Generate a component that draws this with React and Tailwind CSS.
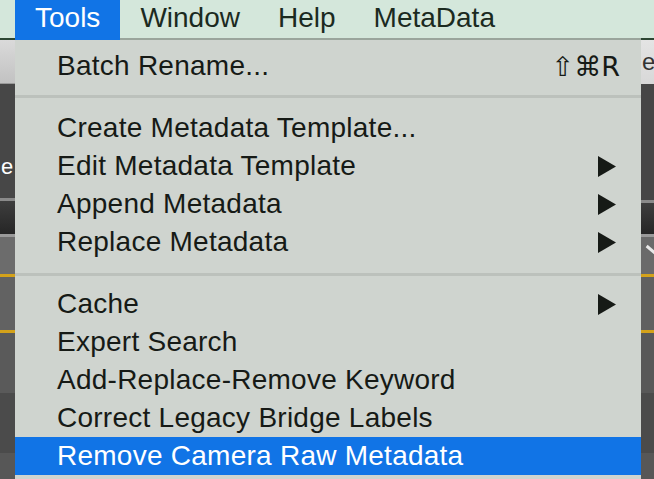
import React from "react";

const font = { fontFamily: '"Liberation Sans", Arial, sans-serif' };

const Arrow = () => (
  <svg width="18" height="21" viewBox="0 0 18 21" className="shrink-0">
    <polygon points="0,0 18,10.5 0,21" fill="#161a16" />
  </svg>
);

const Item = ({ label, arrow, shortcut, active }) => (
  <div
    className={`h-[38px] flex items-center pl-[42px] pr-[25px] text-[28px] leading-none ${
      active ? "bg-[#1174e6] text-white" : "text-[#161a16]"
    }`}
  >
    <span className="flex-1 whitespace-nowrap tracking-[0.25px]">{label}</span>
    {arrow && <Arrow />}
    {shortcut && (
      <span
        className="whitespace-nowrap text-[27px] mr-[-4px]"
        style={{ fontFamily: '"DejaVu Sans", "Liberation Sans", sans-serif' }}
      >
        {shortcut}
      </span>
    )}
  </div>
);

const Separator = ({ top }) => (
  <div className={top}>
    <div className="h-[3px] bg-[#bcc1bc]" />
  </div>
);

export default function App() {
  return (
    <div className="w-[654px] h-[479px] overflow-hidden bg-[#4a4a4a] flex flex-col" style={font}>
      {/* menu bar */}
      <div className="h-[40px] flex bg-[#d4e7db] text-[28px] leading-none text-[#1b2a1f] shrink-0">
        <div className="w-[15px] border-b-2 border-[#2c4633]" />
        <div className="h-[40px] px-5 flex items-center bg-[#1174e6] text-white pb-[4px]">Tools</div>
        <div className="flex-1 flex border-b-2 border-[#9aa59c] pb-[2px]">
          <div className="px-5 flex items-center">Window</div>
          <div className="pl-[18px] pr-5 flex items-center">Help</div>
          <div className="px-[18px] flex items-center">MetaData</div>
          <div className="flex-1" />
        </div>
        <div className="w-[13px] border-b-2 border-[#2c4633]" />
      </div>

      <div className="flex flex-1 min-h-0">
        {/* app content peeking on the left */}
        <div className="w-[15px] flex flex-col shrink-0">
          <div className="h-[44px] bg-gradient-to-b from-[#dadada] to-[#c2c2c2] border-b border-[#9a9a9a]" />
          <div className="h-[114px] bg-[#474747] flex items-end pb-[20px] text-white text-[22px] leading-none">
            <span className="pl-[1px]">e</span>
          </div>
          <div className="h-[3px] bg-[#8a8a8a]" />
          <div className="h-[33px] bg-gradient-to-b from-[#3e3e3e] to-[#262626]" />
          <div className="h-[3px] bg-[#9a9a9a]" />
          <div className="h-[37px] bg-[#6c6c6c]" />
          <div className="h-[3px] bg-[#d4a21a]" />
          <div className="h-[53px] bg-[#626262]" />
          <div className="h-[3px] bg-[#d4a21a]" />
          <div className="h-[60px] bg-[#5a5a5a]" />
          <div className="h-[60px] bg-[#4b4b4b]" />
          <div className="flex-1 bg-[#575757]" />
        </div>

        {/* dropdown menu */}
        <div className="w-[626px] bg-[#cfd4cf] pt-[7px] shrink-0">
          <Item label="Batch Rename..." shortcut="⇧⌘R" />
          <Separator top="pt-[10px] pb-[11px]" />
          <Item label="Create Metadata Template..." />
          <Item label="Edit Metadata Template" arrow />
          <Item label="Append Metadata" arrow />
          <Item label="Replace Metadata" arrow />
          <Separator top="pt-[12px] pb-[9px]" />
          <Item label="Cache" arrow />
          <Item label="Expert Search" />
          <Item label="Add-Replace-Remove Keyword" />
          <Item label="Correct Legacy Bridge Labels" />
          <Item label="Remove Camera Raw Metadata" active />
        </div>

        {/* app content peeking on the right */}
        <div className="flex-1 flex flex-col">
          <div className="h-[44px] bg-gradient-to-b from-[#e4e4e4] to-[#d8d8d8] flex items-center text-[#333] text-[24px] leading-none overflow-hidden">
            <span className="ml-[1px]">e</span>
          </div>
          <div className="h-[116px] bg-[#464646]" />
          <div className="h-[3px] bg-[#8a8a8a]" />
          <div className="h-[31px] bg-gradient-to-b from-[#3e3e3e] to-[#262626]" />
          <div className="h-[3px] bg-[#9a9a9a]" />
          <div className="h-[37px] bg-[#6a6a6a] relative overflow-hidden">
            <div className="absolute left-[4px] top-[12px] w-[14px] h-[3px] bg-[#e8e8e8] rotate-[40deg]" />
          </div>
          <div className="h-[3px] bg-[#d4a21a]" />
          <div className="h-[53px] bg-[#606060]" />
          <div className="h-[3px] bg-[#d4a21a]" />
          <div className="h-[60px] bg-[#585858]" />
          <div className="h-[60px] bg-[#4b4b4b]" />
          <div className="flex-1 bg-[#575757]" />
        </div>
      </div>
    </div>
  );
}
